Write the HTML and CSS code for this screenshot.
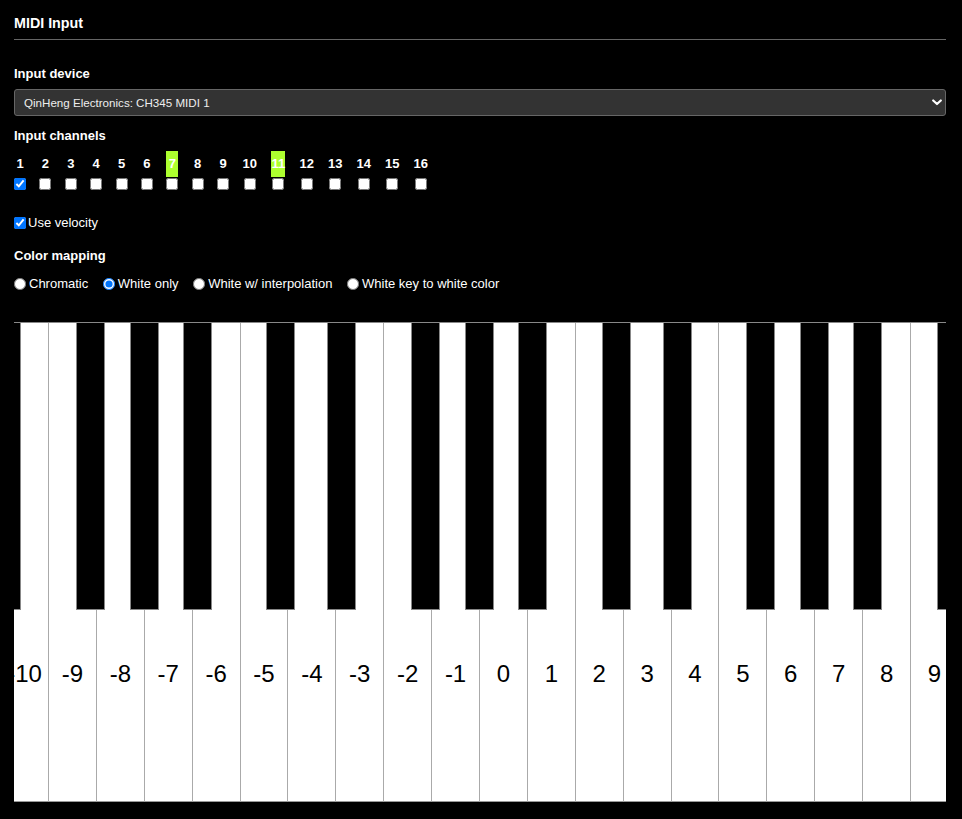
FILE: index.html
```html
<!DOCTYPE html>
<html lang="en">
<head>
<meta charset="utf-8">
<title>MIDI Input</title>
<link rel="stylesheet" href="styles.css">
</head>
<body>
<main class="page">
  <h2 class="title">MIDI Input</h2>

  <div class="section-label first">Input device</div>
  <div class="select-wrap">
    <select class="device-select">
      <option>QinHeng Electronics: CH345 MIDI 1</option>
    </select>
    <svg class="chev" width="10" height="7" viewBox="0 0 10 7"><polyline points="1.2,1.5 5,5 8.8,1.5" fill="none" stroke="#fff" stroke-width="2.2" stroke-linecap="round" stroke-linejoin="round"/></svg>
  </div>

  <div class="section-label ch-head">Input channels</div>
  <div class="channels">
    <label class="ch"><span class="ch-num">1</span><input type="checkbox" checked></label>
    <label class="ch"><span class="ch-num">2</span><input type="checkbox"></label>
    <label class="ch"><span class="ch-num">3</span><input type="checkbox"></label>
    <label class="ch"><span class="ch-num">4</span><input type="checkbox"></label>
    <label class="ch"><span class="ch-num">5</span><input type="checkbox"></label>
    <label class="ch"><span class="ch-num">6</span><input type="checkbox"></label>
    <label class="ch"><span class="ch-num active">7</span><input type="checkbox"></label>
    <label class="ch"><span class="ch-num">8</span><input type="checkbox"></label>
    <label class="ch"><span class="ch-num">9</span><input type="checkbox"></label>
    <label class="ch wide"><span class="ch-num">10</span><input type="checkbox"></label>
    <label class="ch wide"><span class="ch-num active">11</span><input type="checkbox"></label>
    <label class="ch wide"><span class="ch-num">12</span><input type="checkbox"></label>
    <label class="ch wide"><span class="ch-num">13</span><input type="checkbox"></label>
    <label class="ch wide"><span class="ch-num">14</span><input type="checkbox"></label>
    <label class="ch wide"><span class="ch-num">15</span><input type="checkbox"></label>
    <label class="ch wide"><span class="ch-num">16</span><input type="checkbox"></label>
  </div>

  <label class="check-row"><input type="checkbox" checked>Use velocity</label>

  <div class="section-label map-head">Color mapping</div>
  <div class="radios">
    <label class="radio"><input type="radio" name="map">Chromatic</label>
    <label class="radio"><input type="radio" name="map" checked>White only</label>
    <label class="radio"><input type="radio" name="map">White w/ interpolation</label>
    <label class="radio"><input type="radio" name="map">White key to white color</label>
  </div>

  <div class="piano">
    <div class="keys">
      <div class="wk"><span class="bk ds"></span><span class="lbl">-11</span></div>
      <div class="wk"><span class="lbl">-10</span></div>
      <div class="wk"><span class="bk fs"></span><span class="lbl">-9</span></div>
      <div class="wk"><span class="bk gs"></span><span class="lbl">-8</span></div>
      <div class="wk"><span class="bk as"></span><span class="lbl">-7</span></div>
      <div class="wk"><span class="lbl">-6</span></div>
      <div class="wk"><span class="bk cs"></span><span class="lbl">-5</span></div>
      <div class="wk"><span class="bk ds"></span><span class="lbl">-4</span></div>
      <div class="wk"><span class="lbl">-3</span></div>
      <div class="wk"><span class="bk fs"></span><span class="lbl">-2</span></div>
      <div class="wk"><span class="bk gs"></span><span class="lbl">-1</span></div>
      <div class="wk"><span class="bk as"></span><span class="lbl">0</span></div>
      <div class="wk"><span class="lbl">1</span></div>
      <div class="wk"><span class="bk cs"></span><span class="lbl">2</span></div>
      <div class="wk"><span class="bk ds"></span><span class="lbl">3</span></div>
      <div class="wk"><span class="lbl">4</span></div>
      <div class="wk"><span class="bk fs"></span><span class="lbl">5</span></div>
      <div class="wk"><span class="bk gs"></span><span class="lbl">6</span></div>
      <div class="wk"><span class="bk as"></span><span class="lbl">7</span></div>
      <div class="wk"><span class="lbl">8</span></div>
      <div class="wk"><span class="bk cs"></span><span class="lbl">9</span></div>
    </div>
  </div>
</main>
</body>
</html>
```

FILE: styles.css
```css
html, body {
  margin: 0;
  padding: 0;
  background: #000;
}

body {
  font-family: "Liberation Sans", Arial, sans-serif;
  font-size: 13px;
  color: #fff;
}

.page {
  padding: 0 16px 0 14px;
  height: 819px;
  box-sizing: border-box;
  overflow: hidden;
}

.title {
  margin: 0;
  padding: 14px 0 7px;
  font-size: 14.3px;
  line-height: 18px;
  font-weight: bold;
  border-bottom: 1px solid #666;
}

.section-label {
  font-weight: bold;
  line-height: 16px;
}

.section-label.first {
  margin-top: 26px;
}

.select-wrap {
  position: relative;
  margin-top: 7px;
}

.device-select {
  display: block;
  width: 100%;
  height: 27px;
  margin: 0;
  padding: 0 0 0 9px;
  appearance: none;
  -webkit-appearance: none;
  background: #333;
  color: #eee;
  border: 1px solid #666;
  border-radius: 3px;
  font-family: "Liberation Sans", Arial, sans-serif;
  font-size: 11.6px;
}

.chev {
  position: absolute;
  right: 4px;
  top: 10px;
  pointer-events: none;
}

.ch-head {
  margin-top: 12px;
}

.channels {
  display: flex;
  margin-top: 7px;
}

.ch {
  display: flex;
  flex-direction: column;
  align-items: center;
  width: 12px;
  margin-right: 13.4px;
  flex: none;
}

.ch.wide {
  width: 14.5px;
  margin-right: 14px;
}

.ch-num {
  min-width: 12px;
  height: 26px;
  line-height: 26px;
  text-align: center;
  font-weight: bold;
}

.ch-num.active {
  background: #adff2f;
}

.ch input {
  margin: 0.5px 0 0;
  width: 12px;
  height: 12px;
}

.check-row {
  display: flex;
  align-items: center;
  margin-top: 25px;
  line-height: 16px;
}

.check-row input {
  margin: 0 2px 0 0;
  width: 12px;
  height: 12px;
}

.map-head {
  margin-top: 17px;
}

.radios {
  display: flex;
  gap: 14.6px;
  margin-top: 12px;
  line-height: 16px;
}

.radio {
  display: flex;
  align-items: center;
}

.radio input {
  margin: 0 3px 0 0;
  width: 12px;
  height: 12px;
}

.piano {
  margin-top: 30px;
  height: 480px;
  border-top: 1px solid #888;
  box-sizing: border-box;
  overflow: hidden;
}

.keys {
  display: flex;
  margin-left: -60.8px;
  height: 479px;
}

.wk {
  position: relative;
  flex: none;
  width: 47.9px;
  height: 479px;
  box-sizing: border-box;
  background: #fff;
  border-right: 1px solid #aaa;
  border-bottom: 1px solid #999;
  text-align: center;
  color: #000;
}

.lbl {
  display: block;
  padding-top: 337px;
  font-size: 24px;
  line-height: 28px;
}

.bk {
  position: absolute;
  z-index: 1;
  top: 0;
  width: 29px;
  height: 287px;
  box-sizing: border-box;
  background: #000;
  border: 1px solid #888;
  border-top: none;
}

.bk.cs { left: calc(100% - 21px); }
.bk.ds { left: calc(100% - 8px); }
.bk.fs { left: calc(100% - 20px); }
.bk.gs { left: calc(100% - 14px); }
.bk.as { left: calc(100% - 9px); }
```
